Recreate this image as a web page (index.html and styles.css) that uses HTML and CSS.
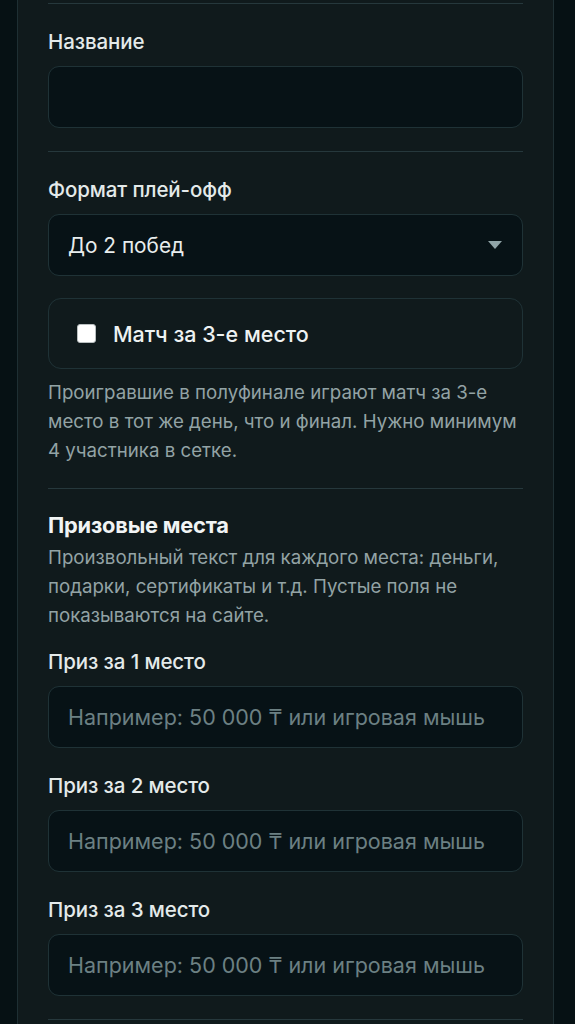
FILE: index.html
```html
<!DOCTYPE html>
<html lang="ru">
<head>
<meta charset="utf-8">
<title>Настройки турнира</title>
<link rel="stylesheet" href="styles.css">
</head>
<body>
<div class="panel">
  <div class="divider first"></div>

  <div class="field">
    <label class="label" for="name">Название</label>
    <input class="control" id="name" type="text">
  </div>

  <div class="divider"></div>

  <div class="field">
    <div class="label">Формат плей-офф</div>
    <div class="control select">
      <span>До 2 побед</span>
      <svg class="caret" width="14" height="8" viewBox="0 0 14 8"><path d="M0 0H14L7 8Z" fill="#90a4a7"/></svg>
    </div>
  </div>

  <div class="check-card">
    <span class="checkbox"></span>
    <span class="check-text">Матч за 3-е место</span>
  </div>
  <p class="hint after-card">Проигравшие в полуфинале играют матч за 3-е место в тот же день, что и финал. Нужно минимум 4 участника в сетке.</p>

  <div class="divider"></div>

  <h3 class="heading">Призовые места</h3>
  <p class="hint desc">Произвольный текст для каждого места: деньги, подарки, сертификаты и т.д. Пустые поля не показываются на сайте.</p>

  <div class="field prize first-prize">
    <label class="label">Приз за 1 место</label>
    <input class="control" type="text" placeholder="Например: 50 000 ₸ или игровая мышь">
  </div>
  <div class="field prize">
    <label class="label">Приз за 2 место</label>
    <input class="control" type="text" placeholder="Например: 50 000 ₸ или игровая мышь">
  </div>
  <div class="field prize">
    <label class="label">Приз за 3 место</label>
    <input class="control" type="text" placeholder="Например: 50 000 ₸ или игровая мышь">
  </div>

  <div class="divider last"></div>
</div>
</body>
</html>
```
FILE: styles.css
```css
html, body {
  margin: 0;
  padding: 0;
  background: #061114;
  height: 100%;
}
body {
  font-family: Inter, "Noto Sans", "Liberation Sans", sans-serif;
  color: #e6ecec;
  overflow: hidden;
}
.panel {
  margin-left: 17px;
  width: 475px;
  padding: 0 30px 0 30px;
  min-height: 1024px;
  background: #101a1c;
  border-left: 1px solid #1e2f33;
  border-right: 1px solid #1e2f33;
  display: flex;
  flex-direction: column;
}
.divider {
  height: 1px;
  background: #26383c;
  margin-top: 23px;
}
.divider.first {
  margin-top: 3px;
}
.field {
  display: flex;
  flex-direction: column;
  margin-top: 26px;
}
.label {
  font-size: 20.5px;
  line-height: 24px;
  font-weight: 500;
  color: #e4eaea;
  letter-spacing: -0.1px;
  margin-bottom: 12px;
}
.control {
  box-sizing: border-box;
  height: 62px;
  width: 100%;
  background: #071216;
  border: 1px solid #1f3236;
  border-radius: 11px;
  padding: 0 19px;
  font-family: inherit;
  font-size: 21.5px;
  color: #e8eded;
  outline: none;
  letter-spacing: 0;
}
.control::placeholder {
  color: #6c8083;
}
.select {
  display: flex;
  align-items: center;
  justify-content: space-between;
  font-size: 20.8px;
}
.caret {
  display: block;
  margin-right: 1px;
}
.check-card {
  margin-top: 22px;
  box-sizing: border-box;
  height: 71px;
  border: 1px solid #1f3236;
  border-radius: 13px;
  display: flex;
  align-items: center;
  padding-left: 28px;
}
.checkbox {
  box-sizing: border-box;
  width: 19px;
  height: 19px;
  background: #ffffff;
  border: 1px solid #b9bfc0;
  border-radius: 3px;
  margin-right: 17px;
}
.check-text {
  font-size: 21.5px;
  font-weight: 500;
  color: #eef2f2;
}
.hint {
  margin: 0;
  font-size: 18.7px;
  line-height: 29px;
  color: #93a3a5;
}
.after-card {
  margin-top: 9px;
}
.heading {
  margin: 22px 0 0 0;
  font-size: 21.8px;
  line-height: 28px;
  font-weight: 700;
  color: #f1f4f4;
  letter-spacing: -0.2px;
}
.desc {
  margin-top: 4px;
}
.prize.first-prize {
  margin-top: 20px;
}
```
